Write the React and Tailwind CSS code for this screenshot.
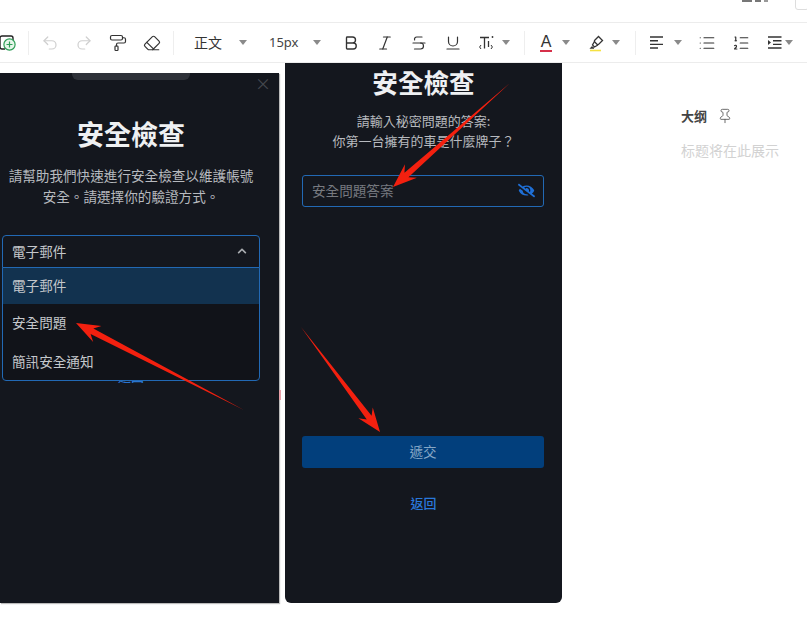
import {
  Bold,
  Eraser,
  Italic,
  List,
  ListOrdered,
  PaintRoller,
  Pin,
  Redo2,
  Strikethrough,
  Underline,
  Undo2,
} from "lucide-react";
import { FaChevronUp, FaEyeSlash } from "react-icons/fa";

const Caret = ({ className = "" }) => (
  <span className={`h-0 w-0 border-x-[4.5px] border-t-[5px] border-x-transparent border-t-[#8a8a8a] ${className}`} />
);

const Sep = ({ className = "" }) => <span className={`h-[24px] w-px bg-[#eeeeee] ${className}`} />;

const Cell = ({ children, className = "" }) => (
  <span className={`flex h-full w-[34px] shrink-0 items-center justify-center text-[#333333] ${className}`}>{children}</span>
);

function DocAdd() {
  return (
    <svg width="18" height="18" viewBox="0 0 18 18" fill="none">
      <path d="M12 2H3a2 2 0 0 0-2 2v9a2 2 0 0 0 2 2h3" stroke="#222" strokeWidth="1.4" />
      <path d="M12 2a2 2 0 0 1 2 2v2" stroke="#222" strokeWidth="1.4" />
      <circle cx="10.5" cy="10.5" r="5.6" fill="#e6f6ea" stroke="#2f9e57" strokeWidth="1.2" />
      <path d="M10.5 7.5v6M7.5 10.5h6" stroke="#2f9e57" strokeWidth="1.2" />
    </svg>
  );
}

function FontSizeIcon() {
  return (
    <svg width="16" height="16" viewBox="0 0 16 16" fill="none" stroke="#333" strokeWidth="1.3">
      <path d="M1 2.5h9M5.5 2.5v11" />
      <path d="M9.5 6v6" />
      <circle cx="13.5" cy="2" r="0.9" fill="#333" stroke="none" />
      <path d="M2 10l-1.4 2L2 14M12 10l1.4 2-1.4 2" strokeWidth="1" />
    </svg>
  );
}

function HighlightIcon() {
  return (
    <svg width="18" height="18" viewBox="0 0 18 18" fill="none">
      <path d="M6.5 6.5L10.5 2.5l4 4-4 4-1 .2-3-3z" stroke="#333" strokeWidth="1.3" />
      <path d="M6.5 7.5L4.5 11l2 2 3.4-2M4.5 12.5L3 14h3" stroke="#333" strokeWidth="1.3" />
      <path d="M2 16.5h11" stroke="#f5e142" strokeWidth="1.6" />
    </svg>
  );
}

function IndentIcon() {
  return (
    <svg width="14" height="13" viewBox="0 0 14 13" fill="none" stroke="#333" strokeWidth="1.4">
      <path d="M0 1h13.5M5 4.7h8.5M5 8.4h8.5M0 12h13.5" />
      <path d="M0 4l3 2.5L0 9z" fill="#333" stroke="none" />
    </svg>
  );
}

function Toolbar() {
  const ic = { size: 18, strokeWidth: 1.6 };
  return (
    <div className="flex h-[41px] items-center border-y border-[#ececec]">
      <Cell className="ml-[-9px]"><DocAdd /></Cell>
      <Sep className="ml-[3px]" />
      <Cell className="ml-[4px] text-[#cfcfcf]"><Undo2 {...ic} /></Cell>
      <Cell className="text-[#cfcfcf]"><Redo2 {...ic} /></Cell>
      <Cell><PaintRoller {...ic} /></Cell>
      <Cell><Eraser {...ic} /></Cell>
      <Sep className="ml-[4px]" />
      <span className="ml-[20px] w-[30px] shrink-0 text-[14px] text-[#333333]">正文</span>
      <Caret className="ml-[15px]" />
      <span className="ml-[22px] w-[32px] shrink-0 text-[13px] text-[#444444] [font-family:'Noto_Sans',sans-serif]">15px</span>
      <Caret className="ml-[12px]" />
      <Cell className="ml-[13px]"><Bold size={18} strokeWidth={1.8} /></Cell>
      <Cell><Italic {...ic} /></Cell>
      <Cell><Strikethrough {...ic} /></Cell>
      <Cell><Underline {...ic} /></Cell>
      <Cell><FontSizeIcon /></Cell>
      <Caret className="ml-[-2px]" />
      <Sep className="ml-[14px]" />
      <span className="ml-[14px] flex w-[14px] shrink-0 flex-col items-center">
        <span className="text-[16px] leading-[17px] text-[#333333] [font-family:'Liberation_Sans',sans-serif]">A</span>
        <span className="h-[2px] w-[12px] bg-[#d6304a]" />
      </span>
      <Caret className="ml-[9px]" />
      <span className="ml-[18px] flex w-[18px] shrink-0 justify-center"><HighlightIcon /></span>
      <Caret className="ml-[6px]" />
      <Sep className="ml-[15px]" />
      <Cell className="ml-[4px]">
        <svg width="14" height="13" viewBox="0 0 14 13" stroke="#333" strokeWidth="1.4">
          <path d="M0 1h13M0 4.7h8M0 8.4h13M0 12h8" />
        </svg>
      </Cell>
      <Caret className="ml-[0px]" />
      <Cell className="ml-[8px]"><List {...ic} /></Cell>
      <Cell><ListOrdered {...ic} /></Cell>
      <Cell><IndentIcon /></Cell>
      <Caret className="ml-[-7px]" />
    </div>
  );
}

const Title = ({ className = "" }) => (
  <h2 className={`text-center font-bold leading-[36px] text-[#eef0f2] ${className}`}>安全檢查</h2>
);

function LeftPanel() {
  return (
    <section className="relative mt-[10px] flex h-[530px] w-[279px] shrink-0 flex-col bg-[#14171e] pr-[17px] shadow-[1px_1px_1px_#bbbbbb]">
      <div className="ml-[72px] h-[7px] w-[118px] rounded-b-[6px] bg-[#2e3138]" />
      <span className="absolute right-[8px] top-[1px] text-[16px] leading-[18px] text-[#45484e]">×</span>
      <Title className="mt-[36px] text-[27px]" />
      <p className="mt-[13px] text-center text-[13.6px] leading-[20.5px] text-[#b7babf]">
        請幫助我們快速進行安全檢查以維護帳號
        <br />
        安全。請選擇你的驗證方式。
      </p>
      <div className="relative ml-[2px] mt-[29px] w-[258px]">
        <div className="flex h-[33px] items-center justify-between rounded-t-[4px] border border-[#2269b4] pb-[1px] pl-[9px] pr-[12px] text-[13.6px] text-[#c4c7cb]">
          電子郵件
          <FaChevronUp size={10} className="text-[#a9acb0]" />
        </div>
        <div className="absolute inset-x-0 top-[32px] z-10 flex h-[114px] flex-col rounded-b-[4px] border border-[#2269b4] bg-[#111319] text-[13.6px] text-[#c4c7cb]">
          <div className="flex h-[36px] items-center bg-[#12324f] pb-[1px] pl-[9px]">電子郵件</div>
          <div className="flex h-[38px] items-center pb-[1px] pl-[9px]">安全問題</div>
          <div className="flex h-[38px] items-center pl-[9px]">簡訊安全通知</div>
        </div>
      </div>
      <span className="mt-[99px] text-center text-[13px] font-medium leading-[18px] text-[#2a74cf]">返回</span>
    </section>
  );
}

function RightPanel() {
  return (
    <section className="ml-[6px] flex h-[540px] w-[277px] shrink-0 flex-col rounded-b-[6px] bg-[#14171e]">
      <Title className="mt-[1px] text-[25.6px]" />
      <p className="mt-[11px] text-center text-[13px] leading-[20px] text-[#b7babf]">
        請輸入秘密問題的答案:
        <br />
        你第一台擁有的車是什麼牌子？
      </p>
      <div className="ml-[17px] mr-[18px] mt-[24px] flex h-[32px] items-center justify-between rounded-[3px] border border-[#2269b4] pb-[1px] pl-[9px] pr-[8px] text-[13.6px] text-[#777a80]">
        安全問題答案
        <FaEyeSlash size={17} className="text-[#1f6fd6]" />
      </div>
      <button className="ml-[17px] mr-[18px] mt-[229px] h-[32px] rounded-[3px] bg-[#023f7c] pb-[1px] text-[13.6px] text-[#86a7c6]">遞交</button>
      <span className="mt-[26px] text-center text-[13px] font-medium leading-[18px] text-[#2a78dc]">返回</span>
    </section>
  );
}

function Outline() {
  return (
    <aside className="ml-[119px] flex flex-col pt-[43px]">
      <div className="flex items-center">
        <span className="text-[13px] font-bold leading-[20px] text-[#444444]">大纲</span>
        <Pin size={16} strokeWidth={1.3} className="ml-[10px] text-[#555555]" />
      </div>
      <span className="mt-[14px] whitespace-nowrap text-[14px] leading-[20px] text-[#d2d2d2]">标题将在此展示</span>
    </aside>
  );
}

// tail to tip, the shaft swells towards the head
function arrowPoints([x1, y1], [x2, y2]) {
  const len = Math.hypot(x2 - x1, y2 - y1);
  const ux = (x2 - x1) / len;
  const uy = (y2 - y1) / len;
  const nx = -uy;
  const ny = ux;
  const at = (back, side) => `${x2 - ux * back + nx * side},${y2 - uy * back + ny * side}`;
  return [
    `${x1},${y1}`,
    at(18, 3),
    at(24, 9),
    `${x2},${y2}`,
    at(24, -9),
    at(18, -3),
  ].join(" ");
}

function Arrows() {
  return (
    <svg className="pointer-events-none absolute left-0 top-0 z-20" width="807" height="624">
      <polygon points={arrowPoints([244, 410], [76, 323])} fill="#f3200f" />
      <polygon points={arrowPoints([510, 83], [393, 187])} fill="#f3200f" />
      <polygon points={arrowPoints([301, 327], [380, 432])} fill="#f3200f" />
    </svg>
  );
}

export default function App() {
  return (
    <div className="relative h-[624px] w-[807px] overflow-hidden bg-white [font-family:'Noto_Sans_CJK_TC',sans-serif]">
      <div className="flex h-[22px] justify-end overflow-hidden">
        <span className="mr-[3px] h-[2px] w-[10px] bg-[#777777]" />
        <span className="mr-[3px] h-[2px] w-[6px] bg-[#777777]" />
        <span className="mr-[27px] h-[2px] w-[4px] bg-[#999999]" />
        <span className="mr-[-2px] mt-[-6px] h-[16px] w-[14px] rounded-[3px] border border-[#dddddd]" />
      </div>
      <Toolbar />
      <main className="flex">
        <LeftPanel />
        <RightPanel />
        <Outline />
      </main>
      <span className="absolute left-[279px] top-[390px] h-[10px] w-[2px] bg-[#e8a0a8]" />
      <Arrows />
    </div>
  );
}
